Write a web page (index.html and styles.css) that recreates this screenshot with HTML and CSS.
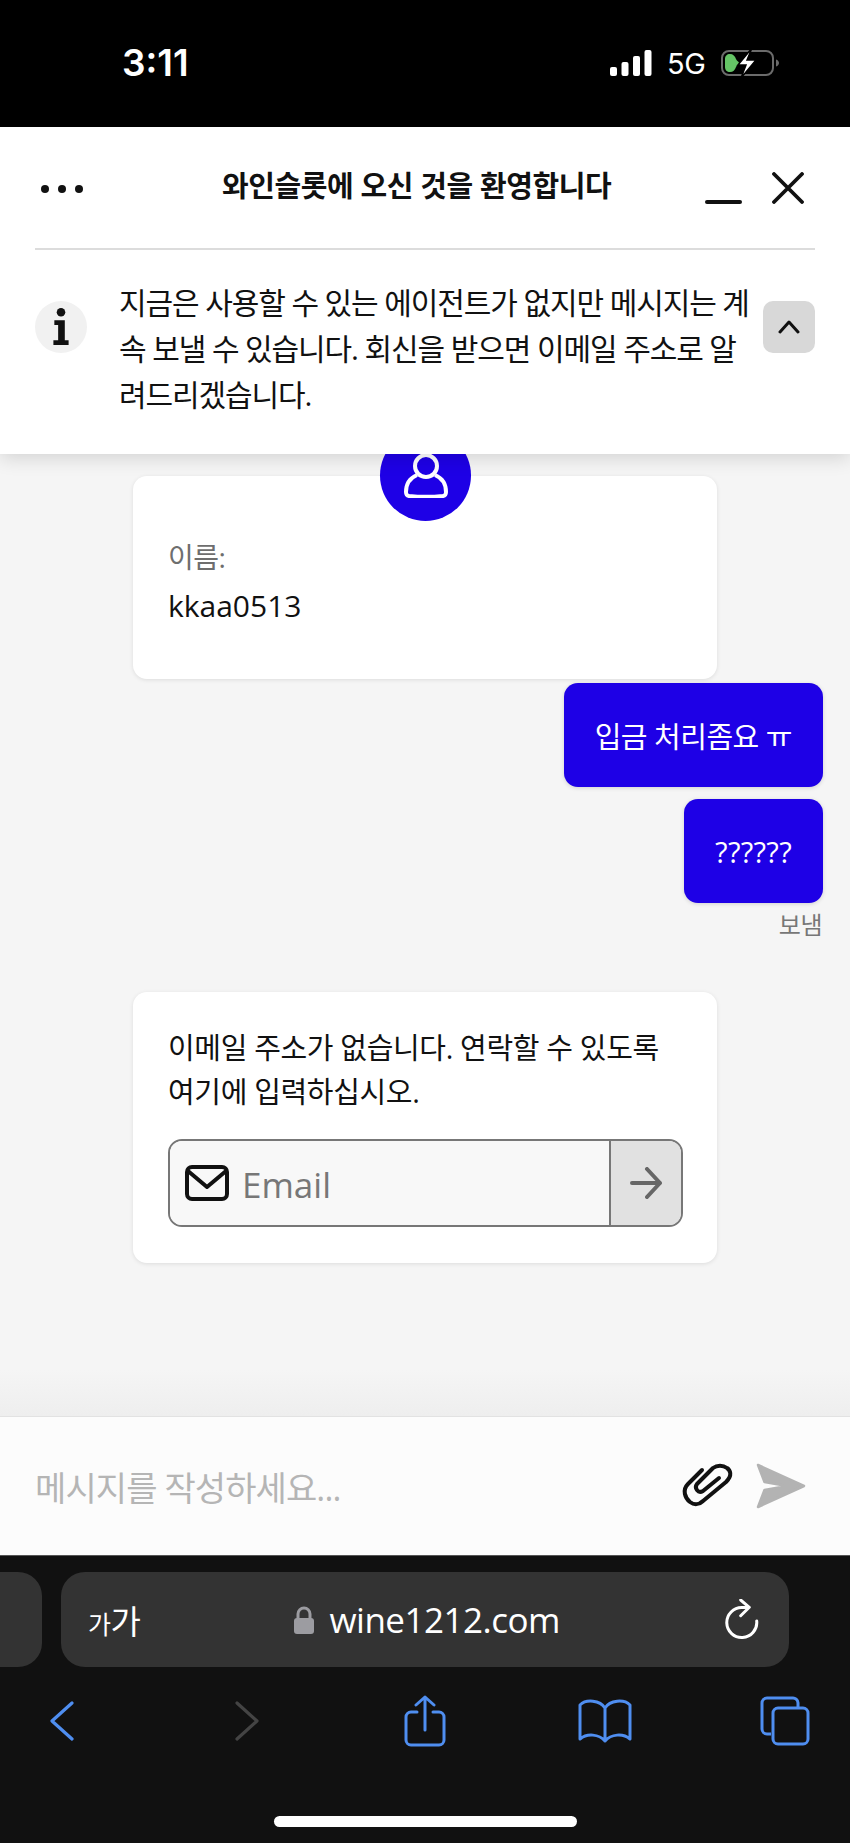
FILE: index.html
```html
<!DOCTYPE html>
<html lang="ko">
<head>
  <meta charset="UTF-8" />
  <meta name="viewport" content="width=device-width, initial-scale=1.0"/>
  <title>와인슬롯 채팅</title>
  <link rel="stylesheet" href="styles.css">
</head>
<body>
  <div class="phone">
    <div class="status-bar">
      <div class="time">3:11</div>
      <div class="status-icons">
        <svg class="signal" width="42" height="26" viewBox="0 0 42 26" fill="#fff">
          <rect x="0" y="17" width="7" height="9" rx="2"/>
          <rect x="11.500" y="12" width="7" height="14" rx="2"/>
          <rect x="23" y="6" width="7" height="20" rx="2"/>
          <rect x="34.500" y="0" width="7" height="26" rx="2"/>
        </svg>
        <span class="network">5G</span>
        <svg class="battery" width="58" height="26" viewBox="0 0 58 26">
          <rect x="1" y="1" width="51" height="24" rx="7" fill="none" stroke="#6b6b6b" stroke-width="2"/>
          <path d="M55 9.500c2 .6 3 2 3 3.500s-1 2.900-3 3.500z" fill="#6b6b6b"/>
          <path d="M4 9c0-3 2-5 5-5s5 2 6 5c.6 2 3 2.500 3 4s-2.400 2-3 4c-1 3-3 5-6 5s-5-2-5-5z" fill="#65c466"/>
          <path d="M31 -2 L17 15 H25 L20 28 L35 10 H26 Z" fill="#fff" stroke="#000" stroke-width="1.500"/>
        </svg>
      </div>
    </div>

    <header class="chat-header">
      <div class="title-row">
        <div class="more-dots"><span></span><span></span><span></span></div>
        <h1 class="chat-title">와인슬롯에 오신 것을 환영합니다</h1>
        <div class="window-btns">
          <span class="minimize"></span>
          <svg width="32" height="32" viewBox="0 0 32 32" fill="none" stroke="#111" stroke-width="3.800" stroke-linecap="round">
            <path d="M2 2 L30 30 M30 2 L2 30"/>
          </svg>
        </div>
      </div>
      <div class="notice">
        <div class="notice-icon">
          <svg width="18" height="40" viewBox="0 0 18 40" fill="#111">
            <circle cx="9" cy="4.500" r="4.500"/>
            <path d="M2 13h11v21h4v5H1v-5h5V18H2z"/>
          </svg>
        </div>
        <p class="notice-text">지금은 사용할 수 있는 에이전트가 없지만 메시지는 계속 보낼 수 있습니다. 회신을 받으면 이메일 주소로 알려드리겠습니다.</p>
        <div class="notice-toggle">
          <svg width="22" height="14" viewBox="0 0 22 14" fill="none" stroke="#111" stroke-width="3" stroke-linecap="round" stroke-linejoin="round">
            <path d="M2 12 L11 2 L20 12"/>
          </svg>
        </div>
      </div>
    </header>

    <main class="chat">
      <div class="card name-card">
        <div class="avatar">
          <svg width="46" height="44" viewBox="0 0 46 44" fill="none" stroke="#fff" stroke-width="4" stroke-linejoin="round">
            <circle cx="23" cy="12" r="11"/>
            <path d="M14 21 C7 24 3 30 3 38 C3 41 4 41.500 6 42 C16 43 30 43 40 42 C42 41.500 43 41 43 38 C43 30 39 24 32 21"/>
          </svg>
        </div>
        <div class="field-label">이름:</div>
        <div class="field-value">kkaa0513</div>
      </div>

      <div class="bubble first">입금 처리좀요 ㅠ</div>
      <div class="bubble">??????</div>
      <div class="sent-label">보냄</div>

      <div class="card email-card">
        <p class="email-text">이메일 주소가 없습니다. 연락할 수 있도록 여기에 입력하십시오.</p>
        <div class="email-form">
          <div class="email-field">
            <svg width="44" height="36" viewBox="0 0 44 36" fill="none" stroke="#111" stroke-width="4" stroke-linejoin="round" stroke-linecap="round">
              <rect x="2" y="2" width="40" height="32" rx="5"/>
              <path d="M3 6 L22 22 L41 6"/>
            </svg>
            <span class="email-placeholder">Email</span>
          </div>
          <div class="email-submit">
            <svg width="32" height="32" viewBox="0 0 32 32" fill="none" stroke="#666" stroke-width="4" stroke-linecap="round" stroke-linejoin="round">
              <path d="M2 16 H30 M17 2 L30 16 L17 30"/>
            </svg>
          </div>
        </div>
      </div>

      <div class="chat-fade"></div>
    </main>

    <div class="composer">
      <div class="composer-placeholder">메시지를 작성하세요...</div>
      <svg class="clip" width="48" height="42" viewBox="0 0 48 42" fill="none" stroke="#111" stroke-width="4" stroke-linecap="round" stroke-linejoin="round">
        <path d="M19 5 L5 19 C-1 25 2 33 7 37 C11 40 16 40 20 36 L43 17 C50 10 47 5 44 3 C40 0 34 0 30 3 L14 19 C11 23 15 29 20 26 L36 13"/>
      </svg>
      <svg class="send" width="52" height="46" viewBox="0 0 52 46" fill="#b3b3b3" stroke="#b3b3b3" stroke-width="2.500" stroke-linejoin="round">
        <path d="M3 2 L49 23 L3 44 L9.500 27 L32 23 L9.500 19 Z"/>
      </svg>
    </div>

    <div class="browser">
      <div class="url-row">
        <div class="prev-tab"></div>
        <div class="url-bar">
          <span class="text-size"><span class="text-size-small">가</span>가</span>
          <div class="url">
            <svg width="22" height="28" viewBox="0 0 22 28">
              <path d="M5 13V8a6 6 0 0 1 12 0v5" fill="none" stroke="#9c9ca1" stroke-width="3"/>
              <rect x="1" y="12" width="20" height="16" rx="3" fill="#9c9ca1"/>
            </svg>
            <span>wine1212.com</span>
          </div>
          <svg class="reload" width="34" height="41" viewBox="0 0 34 41" fill="none" stroke="#fff" stroke-width="3" stroke-linecap="round" stroke-linejoin="round">
            <path d="M23 8.500 H17 A15 15 0 1 0 31.700 22 M15.700 1 L24.300 8.300 L15.700 16.700"/>
          </svg>
        </div>
      </div>
      <nav class="nav-row">
        <svg width="24" height="40" viewBox="0 0 24 40" fill="none" stroke="#4f8ef0" stroke-width="3.200" stroke-linecap="round" stroke-linejoin="round">
          <path d="M22 2 L2 20 L22 38"/>
        </svg>
        <svg width="24" height="40" viewBox="0 0 24 40" fill="none" stroke="#444" stroke-width="3.200" stroke-linecap="round" stroke-linejoin="round">
          <path d="M2 2 L22 20 L2 38"/>
        </svg>
        <svg width="42" height="52" viewBox="0 0 42 52" fill="none" stroke="#4f8ef0" stroke-width="3" stroke-linecap="round" stroke-linejoin="round">
          <path d="M13 17 H7 A5 5 0 0 0 2 22 V45 A5 5 0 0 0 7 50 H35 A5 5 0 0 0 40 45 V22 A5 5 0 0 0 35 17 H29"/>
          <path d="M21 35 V2 M12 10 L21 2 L30 10"/>
        </svg>
        <svg width="54" height="44" viewBox="0 0 54 44" fill="none" stroke="#4f8ef0" stroke-width="3" stroke-linecap="round" stroke-linejoin="round">
          <path d="M27 9 C22 1 8 0 2 6 V40 C9 34 21 35 27 42 C33 35 45 34 52 40 V6 C46 0 32 1 27 9 Z M27 9 V42"/>
        </svg>
        <svg width="50" height="50" viewBox="0 0 50 50" fill="none" stroke="#4f8ef0" stroke-width="3">
          <path d="M11 38 H7 A5 5 0 0 1 2 33 V7 A5 5 0 0 1 7 2 H32 A5 5 0 0 1 38 7 V11"/>
          <rect x="13" y="12" width="35" height="36" rx="5"/>
        </svg>
      </nav>
      <div class="home-bar"></div>
    </div>
  </div>
</body>
</html>
```

FILE: styles.css
```css
* {
  box-sizing: border-box;
}
body {
  margin: 0;
  font-family: "Open Sans", "Noto Sans CJK KR", sans-serif;
  color: #111;
  background: #111;
}
.phone {
  width: 850px;
  height: 1843px;
  display: flex;
  flex-direction: column;
  overflow: hidden;
}

/* status bar */
.status-bar {
  height: 127px;
  flex: none;
  background: #000;
  color: #fff;
  display: flex;
  justify-content: space-between;
  padding: 50px 71px 0 122px;
}
.time {
  font-family: Inter, sans-serif;
  font-size: 37px;
  font-weight: 600;
  line-height: 26px;
}
.status-icons {
  display: flex;
  align-items: flex-start;
  gap: 15px;
}
.network {
  font-family: Inter, sans-serif;
  font-size: 29px;
  line-height: 28px;
  width: 39px;
  letter-spacing: -0.5px;
}
.battery {
  overflow: visible;
}

/* header */
.chat-header {
  height: 327px;
  flex: none;
  background: #fff;
  padding: 0 35px;
  position: relative;
  z-index: 2;
  box-shadow: 0 4px 18px rgba(0, 0, 0, 0.14);
}
.title-row {
  height: 123px;
  border-bottom: 2px solid #dcdcdc;
  display: flex;
  align-items: center;
}
.more-dots {
  display: flex;
  gap: 9px;
  margin-left: 6px;
  margin-top: 2px;
}
.more-dots span {
  width: 8px;
  height: 8px;
  border-radius: 50%;
  background: #111;
}
.chat-title {
  flex: 1;
  margin: -8px 0 0;
  padding-left: 139px;
  font-size: 29px;
  font-weight: 700;
  letter-spacing: -0.4px;
  white-space: nowrap;
}
.window-btns {
  display: flex;
  align-items: flex-end;
  gap: 30px;
  margin-right: 11px;
}
.minimize {
  width: 37px;
  height: 4px;
  border-radius: 2px;
  background: #111;
}
.notice {
  display: flex;
  align-items: flex-start;
  padding-top: 30px;
}
.notice-icon {
  width: 52px;
  height: 52px;
  flex: none;
  margin-top: 21px;
  border-radius: 50%;
  background: #f1f1f1;
  display: flex;
  align-items: center;
  justify-content: center;
}
.notice-icon svg {
  height: 38px;
}
.notice-text {
  width: 636px;
  margin: 0 0 0 32px;
  font-size: 30px;
  line-height: 46px;
  letter-spacing: -1.1px;
  word-break: break-all;
  flex: none;
}
.notice-toggle {
  width: 52px;
  height: 52px;
  flex: none;
  margin: 21px 0 0 auto;
  border-radius: 10px;
  background: #d8d8d8;
  display: flex;
  align-items: center;
  justify-content: center;
}

/* conversation */
.chat {
  flex: 1;
  background: #f5f5f5;
  display: flex;
  flex-direction: column;
  padding-top: 22px;
  min-height: 0;
}
.card {
  width: 584px;
  margin-left: 133px;
  padding: 0 34px 0 35px;
  background: #fff;
  border-radius: 14px;
  box-shadow: 0 1px 4px rgba(0, 0, 0, 0.1);
  flex: none;
}
.name-card {
  height: 203px;
  position: relative;
  padding-top: 63px;
}
.avatar {
  position: absolute;
  left: 247px;
  top: -46px;
  width: 91px;
  height: 91px;
  border-radius: 50%;
  background: #1e00e6;
  display: flex;
  align-items: center;
  justify-content: center;
  padding-top: 1px;
}
.field-label {
  font-size: 28px;
  line-height: 36px;
  color: #6e6e6e;
  letter-spacing: -0.5px;
}
.field-value {
  margin-top: 13px;
  font-size: 30px;
  line-height: 36px;
}
.bubble {
  align-self: flex-end;
  margin: 12px 27px 0 0;
  padding: 0 31px;
  height: 104px;
  display: flex;
  align-items: center;
  background: #1e00e6;
  color: #fff;
  font-size: 29px;
  letter-spacing: 0.3px;
  border-radius: 14px;
  box-shadow: 0 1px 4px rgba(0, 0, 0, 0.15);
}
.bubble.first {
  margin-top: 4px;
  letter-spacing: -0.5px;
}
.sent-label {
  align-self: flex-end;
  margin: 6px 28px 0 0;
  font-size: 24px;
  line-height: 32px;
  color: #777;
  letter-spacing: -0.5px;
}
.email-card {
  margin-top: 51px;
  height: 271px;
  padding-top: 34px;
}
.email-text {
  margin: 0;
  font-size: 29px;
  line-height: 44px;
  letter-spacing: -0.35px;
  word-break: keep-all;
}
.email-form {
  margin-top: 25px;
  height: 88px;
  display: flex;
  border: 2px solid #777;
  border-radius: 14px;
  overflow: hidden;
}
.email-field {
  flex: 1;
  background: #f8f8f8;
  display: flex;
  align-items: center;
  gap: 13px;
  padding-left: 15px;
}
.email-placeholder {
  font-size: 35px;
  color: #777;
  margin-top: 2px;
}
.email-submit {
  width: 72px;
  background: #e1e1e1;
  border-left: 2px solid #777;
  display: flex;
  align-items: center;
  justify-content: center;
}
.chat-fade {
  margin-top: auto;
  height: 46px;
  flex: none;
  background: linear-gradient(to bottom, #f5f5f5, #eeeeee);
}

/* message box */
.composer {
  height: 139px;
  flex: none;
  background: #fcfcfc;
  border-top: 1px solid #e2e2e2;
  display: flex;
  align-items: center;
  padding: 0 43px 0 35px;
}
.composer-placeholder {
  flex: 1;
  font-size: 34px;
  letter-spacing: -0.9px;
  color: #b5b5b5;
}
.clip {
  margin-right: 24px;
  overflow: visible;
}

/* browser chrome */
.browser {
  height: 288px;
  flex: none;
  background: #111;
  border-top: 1px solid #555;
  padding-top: 16px;
  display: flex;
  flex-direction: column;
}
.url-row {
  display: flex;
  gap: 19px;
  height: 95px;
  flex: none;
}
.prev-tab {
  width: 42px;
  border-radius: 0 24px 24px 0;
  background: #333;
}
.url-bar {
  width: 728px;
  border-radius: 24px;
  background: #333;
  color: #fff;
  display: flex;
  align-items: center;
  justify-content: space-between;
  padding: 0 30px 0 27px;
}
.text-size {
  font-size: 33px;
  letter-spacing: -0.5px;
  margin-right: -6px;
}
.text-size-small {
  font-size: 25px;
}
.url {
  display: flex;
  align-items: center;
  gap: 14px;
  font-size: 35px;
  letter-spacing: -0.5px;
  margin-right: 6px;
}
.nav-row {
  display: flex;
  align-items: center;
  padding-left: 50px;
  margin-top: 28px;
  height: 52px;
}
.nav-row svg:nth-child(2) {
  margin-left: 161px;
}
.nav-row svg:nth-child(3) {
  margin-left: 145px;
}
.nav-row svg:nth-child(4) {
  margin-left: 132px;
}
.nav-row svg:nth-child(5) {
  margin-left: 128px;
}
.home-bar {
  width: 303px;
  height: 11px;
  margin: 69px auto 0;
  border-radius: 6px;
  background: #fff;
}
```
